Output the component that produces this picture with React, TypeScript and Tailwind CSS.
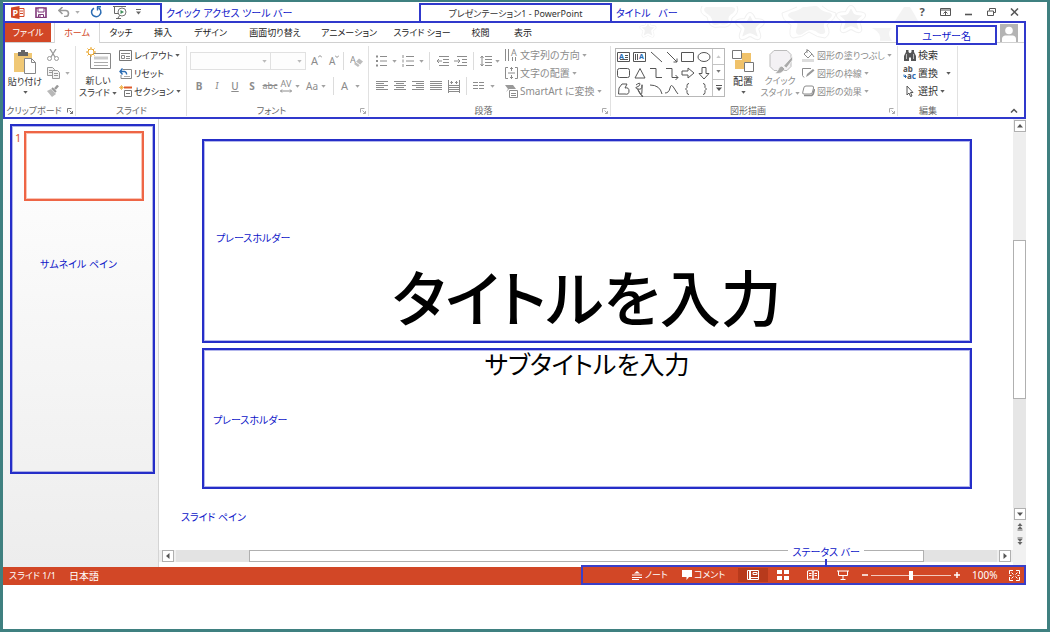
import React, { useState } from 'react'
import clsx from 'clsx'

type IconProps = { w: number; h: number; className?: string; children: React.ReactNode }

function Icon({ w, h, className, children }: IconProps) {
  return (
    <svg
      width={w}
      height={h}
      viewBox={`0 0 ${w} ${h}`}
      fill="none"
      stroke="currentColor"
      className={clsx('block shrink-0', className)}
      aria-hidden="true"
    >
      {children}
    </svg>
  )
}

function Letter({ x, y, size, fill = 'currentColor', bold, children }: {
  x: number
  y: number
  size: number
  fill?: string
  bold?: boolean
  children: React.ReactNode
}) {
  return (
    <text x={x} y={y} fontSize={size} fontWeight={bold ? 700 : 400} fill={fill} stroke="none">
      {children}
    </text>
  )
}

function Caret({ className }: { className?: string }) {
  return (
    <Icon w={5} h={3} className={clsx('opacity-80', className)}>
      <path d="M.3 0h4.400L2.500 2.800z" fill="currentColor" stroke="none" />
    </Icon>
  )
}

function Launcher({ className }: { className?: string }) {
  return (
    <button aria-label="詳細" className={clsx('absolute bottom-[3px] right-[3px]', className)}>
      <Icon w={6} h={6}>
        <path d="M.5 4.500v-4h4M2.500 2.500l3 3M5.500 3v2.500H3" />
      </Icon>
    </button>
  )
}

function Group({ label, width, launcher, className, children }: {
  label: string
  width: string
  launcher?: string
  className?: string
  children: React.ReactNode
}) {
  return (
    <section className={clsx('relative flex shrink-0 flex-col pt-[3px]', width)}>
      <div className={clsx('flex h-[57px] items-start', className)}>{children}</div>
      <h2
        className={clsx(
          'h-[14px] whitespace-nowrap text-center text-[9px] leading-[15px] text-[#666]',
          launcher && 'pr-[13px]',
        )}
      >
        {label}
      </h2>
      {launcher && <Launcher className={launcher} />}
      <span className="absolute bottom-[1px] right-0 top-[3px] w-px bg-[#e1e1e1]" />
    </section>
  )
}

function RowButton({ icon, caret, wide, dim, children }: {
  icon: React.ReactNode
  caret?: boolean
  wide?: boolean
  dim?: boolean
  children: React.ReactNode
}) {
  return (
    <button
      className={clsx(
        'flex h-[18px] items-center gap-[2px] whitespace-nowrap text-[10px] leading-[18px]',
        dim ? 'text-[#8c8c8c]' : 'text-[#333]',
      )}
    >
      <span className="flex w-[13px] justify-center">{icon}</span>
      <span>{children}</span>
      {caret && <Caret className={wide ? 'ml-[6px]' : ''} />}
    </button>
  )
}

function Divider() {
  return <span className="block h-[18px] w-px shrink-0 bg-[#dcdcdc]" />
}

const lineSets = {
  left: [12, 8, 12, 8, 12],
  center: [12, 8, 12, 8, 12],
  right: [12, 8, 12, 8, 12],
  justify: [12, 12, 12, 12, 12],
}

function AlignIcon({ kind }: { kind: keyof typeof lineSets }) {
  return (
    <Icon w={12} h={10}>
      {lineSets[kind].map((len, i) => {
        const x = kind === 'right' ? 12 - len : kind === 'center' ? (12 - len) / 2 : 0
        return <path key={i} d={`M${x} ${i * 2 + 0.5}h${len}`} />
      })}
    </Icon>
  )
}

function Note({ className, children }: { className?: string; children: React.ReactNode }) {
  return (
    <span className={clsx('whitespace-pre text-[10px] leading-[14px] text-[#0d15c8]', className)}>
      {children}
    </span>
  )
}

const starPath = 'M20 2c3 0 4 6 6 8s11 0 12 3-7 6-8 9 5 11 2 13-8-4-12-4-9 6-12 4 3-10 2-13-9-6-8-9 10-1 12-3 3-8 6-8z'

function Decoration() {
  return (
    <svg
      className="absolute right-0 top-[2px] h-[38px] w-[396px]"
      viewBox="0 0 396 38"
      aria-hidden="true"
    >
      <g fill="#f3f3f3" stroke="none">
        <path d="M76 3h26q6 1 1 6-6 3-4 8-1 5-9 3-9 3-8-3 0-5-6-8-4-4 0-6z" />
        <path d="M173 3c8 0 14-3 16 1 6 6 12 3 13 7 0 4-7 5-8 9-1 5 4 8-1 10-5 1-7-5-13-4-6 1-8 7-13 4-3-3 2-8 0-11-3-4-9-5-9-8 1-4 10-3 15-8z" />
        <path d="M265 17q5-8 9-14h6q5 8 8 14zM242 24h20q-6 5 0 13h-12q2-8-8-13z" />
      </g>
      {[
        { x: 106, y: 9, s: 0.7 },
        { x: 207, y: 2, s: 0.7 },
        { x: 10, y: 18, s: 0.4 },
      ].map(star => (
        <g key={star.x} transform={`translate(${star.x} ${star.y}) scale(${star.s})`} fill="#f1f1f1">
          <path d={starPath} stroke="#f1f1f1" strokeWidth="7" strokeLinejoin="round" fill="none" />
          <path d={starPath} stroke="#fff" strokeWidth="4" strokeLinejoin="round" />
        </g>
      ))}
      <g fill="none" stroke="#f1f1f1">
        <path d="M72 2q-4 7 5 11 2 13 13 10 12 2 12-9 8-5 5-12M167 3q-9 4-15 6 0 7 9 12-3 12 2 13 9 0 16-6 9 6 16 6 7-4 2-13 9-7 9-12-9-2-14-7" />
      </g>
    </svg>
  )
}

const tabs = [
  { name: 'タッチ', width: 'w-[42px]' },
  { name: '挿入', width: 'w-[42px]' },
  { name: 'デザイン', width: 'w-[53px]' },
  { name: '画面切り替え', width: 'w-[76px]' },
  { name: 'アニメーション', width: 'w-[72px]' },
  { name: 'スライド ショー', width: 'w-[74px]' },
  { name: '校閲', width: 'w-[43px]' },
  { name: '表示', width: 'w-[42px]' },
]

function TitleBar() {
  return (
    <header className="relative flex h-[19px] items-start pt-[1px]">
      <div className="relative flex h-[20px] w-[159px] items-center border-2 border-[#3039cc] pb-[2px] pl-[6px] text-[#666]">
        <Icon w={14} h={13}>
          <path d="M8 2.500h5v8H8" stroke="#d24726" />
          <path d="M9 5h3M9 7.500h3" stroke="#d24726" />
          <path d="M0 1.500L8.500 0v13L0 11.500z" fill="#d24726" stroke="none" />
          <Letter x={1.500} y={10} size={9} fill="#fff" bold>P</Letter>
        </Icon>
        <button aria-label="上書き保存" className="ml-[10px]">
          <Icon w={12} h={11}>
            <path d="M1 1h10v9.500H1z" stroke="#80397b" strokeWidth="1.600" />
            <path d="M3 1h6v4H3zM3.500 7.500h5v3h-5z" stroke="#80397b" fill="#fff" />
            <path d="M5 8v2.500" stroke="#80397b" />
          </Icon>
        </button>
        <button aria-label="元に戻す" className="ml-[11px] flex items-center gap-[5px] text-[#9a9a9a]">
          <Icon w={12} h={10}>
            <path d="M1 3.500h6.500a3 3 0 010 6H6M4.500 0L1 3.500 4.500 7" strokeWidth="1.600" />
          </Icon>
          <Caret />
        </button>
        <button aria-label="繰り返し" className="ml-[10px]">
          <Icon w={12} h={12}>
            <path d="M8.500 2A4.600 4.600 0 111.800 4.600 5 5 0 014 2.200" stroke="#2b6cb3" strokeWidth="1.600" />
            <path d="M7 .8h4M7.500 .5v4" stroke="#2b6cb3" strokeWidth="1.400" />
          </Icon>
        </button>
        <button aria-label="最初から" className="ml-[11px]">
          <Icon w={14} h={13}>
            <path d="M0 .5h13M1.500 .5v7H6M5 12l2-3" stroke="#666" />
            <circle cx="9" cy="6" r="4" fill="#fff" stroke="#777" />
            <path d="M7.500 4v4L11 6z" fill="#3f8f5a" stroke="none" />
            <path d="M3 12.500h5" />
          </Icon>
        </button>
        <button aria-label="カスタマイズ" className="ml-[9px]">
          <Icon w={5} h={6}>
            <path d="M0 .5h5" />
            <path d="M0 2.500h5L2.500 5.500z" fill="currentColor" stroke="none" />
          </Icon>
        </button>
      </div>
      <Note className="ml-[4px] w-[253px] pt-[3px]">クイック アクセス ツール バー</Note>
      <h1 className="relative h-[20px] w-[193px] whitespace-nowrap border-2 border-[#3039cc] text-center text-[9px] leading-[17px] text-[#333]">
        プレゼンテーション1 - PowerPoint
      </h1>
      <Note className="ml-[4px] pt-[3px]">{'タイトル   バー'}</Note>
      <div className="ml-auto flex h-[18px] items-center gap-[13px] pr-[7px] text-[#555]">
        <button aria-label="ヘルプ" className="w-[10px] text-[11px] font-bold leading-[18px]">?</button>
        <button aria-label="リボンの表示オプション">
          <Icon w={11} h={8}>
            <path d="M.5 .5h10v7H.5zM.5 2h10M5.500 7V3.500M3.500 5.500l2-2 2 2" />
          </Icon>
        </button>
        <button aria-label="最小化">
          <Icon w={10} h={8}>
            <path d="M1 6.500h7" strokeWidth="1.600" />
          </Icon>
        </button>
        <button aria-label="元に戻す (縮小)">
          <Icon w={10} h={8}>
            <path d="M2.500 2.500v-2h6v4H7M.5 3h6v4.500h-6z" />
          </Icon>
        </button>
        <button aria-label="閉じる">
          <Icon w={9} h={8}>
            <path d="M1 .5l7 7M8 .5l-7 7" strokeWidth="1.500" />
          </Icon>
        </button>
      </div>
    </header>
  )
}

function Tabs() {
  return (
    <nav className="flex h-[20px] border-b border-[#d0d0d0] text-[9px] leading-[20px] text-[#222]">
      <button className="w-[46px] shrink-0 whitespace-nowrap bg-[#d24726] text-white">ファイル</button>
      <button className="ml-[3px] h-[20px] w-[46px] shrink-0 whitespace-nowrap border-x border-[#d8d8d8] bg-white text-[#d24726]">
        ホーム
      </button>
      {tabs.map(tab => (
        <button key={tab.name} className={clsx('flex shrink-0 justify-center whitespace-nowrap', tab.width)}>
          {tab.name}
        </button>
      ))}
      <div className="relative ml-auto mt-[2px] flex h-[20px] w-[101px] shrink-0 items-center justify-center border-2 border-[#3039cc] bg-white pt-[2px]">
        <Note>ユーザー名</Note>
      </div>
      <Icon w={18} h={18} className="ml-[3px] mr-[6px] mt-[1px]">
        <path d="M0 0h18v18H0z" fill="#b4b4b4" stroke="none" />
        <circle cx="9" cy="6.500" r="3.800" fill="#fff" stroke="none" />
        <path d="M2 18v-3q0-3 3-3.500h8q3 .5 3 3.500v3z" fill="#fff" stroke="none" />
      </Icon>
    </nav>
  )
}

function ClipboardGroup() {
  return (
    <Group label="クリップボード" width="w-[71px]" launcher="text-[#777]" className="pl-[3px]">
      <button className="flex w-[34px] flex-col items-center whitespace-nowrap pt-[4px] text-[9px] leading-[16px] text-[#333]">
        <Icon w={24} h={24}>
          <path d="M1 3h18v19H1z" fill="#f0c875" stroke="none" />
          <path d="M5 2h10v4H5zM8 0h4v2H8z" fill="#666" stroke="none" />
          <path d="M11.500 8.500h7l4 4v11h-11z" fill="#fff" stroke="#888" />
          <path d="M18.500 8.500v4h4" stroke="#888" />
        </Icon>
        貼り付け
        <Caret className="mt-[1px]" />
      </button>
      <div className="ml-[5px] flex flex-col gap-[6px] pt-[3px] text-[#999]">
        <Icon w={12} h={12}>
          <path d="M3 0l5 8M9 0L4 8" strokeWidth="1.300" />
          <circle cx="2.500" cy="9.500" r="2" />
          <circle cx="9.500" cy="9.500" r="2" />
        </Icon>
        <div className="flex items-center gap-[5px]">
          <Icon w={13} h={12}>
            <path d="M.5 .5h5l2 2v6h-7zM2 3.500h3M2 5.500h3" fill="#f4f4f4" />
            <path d="M5.500 3.500h5l2 2v6h-7zM7 6.500h4M7 8.500h4" fill="#f4f4f4" />
          </Icon>
          <Caret />
        </div>
        <Icon w={12} h={12}>
          <path d="M0 6l4-2 5 5-4 3z" fill="#b8b8b8" stroke="none" />
          <path d="M5 3l4 4" strokeWidth="2" />
          <path d="M8 4l3-3.500" strokeWidth="2.500" />
        </Icon>
      </div>
    </Group>
  )
}

function SlidesGroup() {
  return (
    <Group label="スライド" width="w-[111px]" className="pl-[4px]">
      <button className="flex w-[36px] flex-col items-center whitespace-nowrap pt-[1px] text-[9px] leading-[12px] text-[#333]">
        <Icon w={25} h={24} className="mb-[4px]">
          <path d="M4.500 6.500h20v15h-20z" fill="#fff" stroke="#888" />
          <path d="M8 9.500h14v3H8z" fill="#ccc" stroke="none" />
          <path d="M8 15.500h14M8 18.500h14" stroke="#aaa" />
          <circle cx="5" cy="5" r="3" fill="#fff" stroke="#eaa62c" />
          <path d="M5 0v2M5 8v2M0 5h2M8 5h2M1.500 1.500l1.300 1.300M7.200 7.200l1.300 1.300M1.500 8.500l1.300-1.300M7.200 2.800l1.300-1.300" stroke="#eaa62c" />
        </Icon>
        新しい
        <span className="flex items-center gap-[2px]">スライド<Caret /></span>
      </button>
      <div className="ml-[3px] flex flex-col">
        <RowButton
          caret
          icon={
            <Icon w={13} h={11}>
              <path d="M.5 .5h12v10H.5z" stroke="#777" />
              <path d="M2 3.500h9M2.500 5.500h3v3h-3zM7 6.500h4M7 8.500h4" stroke="#888" />
            </Icon>
          }
        >
          <span className="text-[9px]">レイアウト</span>
        </RowButton>
        <RowButton
          icon={
            <Icon w={13} h={11}>
              <path d="M4 1.500h8.500v9H2V7" stroke="#888" />
              <path d="M5 8.500h6" stroke="#aaa" />
              <path d="M1 3.500h4.500a2.500 2.500 0 012 3M3.500 .5L1 3.500l2.500 3" stroke="#2b6cb3" strokeWidth="1.400" />
            </Icon>
          }
        >
          <span className="text-[9px]">リセット</span>
        </RowButton>
        <RowButton
          caret
          icon={
            <Icon w={13} h={12}>
              <path d="M5 2.500h8" stroke="#dd5a2b" strokeWidth="2" />
              <path d="M5.500 5.500h7v6h-7zM7 8.500h4" stroke="#777" />
              <path d="M2.500 0v5M0 2.500h5M1 1l3 3M4 1L1 4" stroke="#eaa62c" strokeWidth=".7" />
            </Icon>
          }
        >
          <span className="text-[9px]">セクション</span>
        </RowButton>
      </div>
    </Group>
  )
}

function Combo({ label, className }: { label: string; className: string }) {
  return (
    <span className={clsx('relative flex h-[18px] items-center text-[#aaa]', className)}>
      <select aria-label={label} className="h-full w-full appearance-none border border-[#e1e1e1] bg-[#fdfdfd]" />
      <Caret className="pointer-events-none absolute right-[4px]" />
    </span>
  )
}

function FontGroup() {
  return (
    <Group label="フォント" width="w-[182px]" launcher="text-[#aaa]" className="flex-col pl-[3px] text-[#8c8c8c]">
      <div className="flex h-[30px] items-center">
        <Combo label="フォント名" className="w-[81px]" />
        <Combo label="サイズ" className="-ml-px w-[36px]" />
        <button aria-label="フォント サイズの拡大" className="ml-[5px] flex text-[11px] leading-[14px]">
          A
          <Icon w={4} h={3} className="mt-[1px]"><path d="M0 2.500L2 .5l2 2" /></Icon>
        </button>
        <button aria-label="フォント サイズの縮小" className="ml-[7px] flex text-[10px] leading-[14px]">
          A
          <Icon w={4} h={3} className="mt-[1px]"><path d="M0 .5l2 2 2-2" /></Icon>
        </button>
        <span className="ml-[4px]"><Divider /></span>
        <Icon w={13} h={13} className="ml-[6px]">
          <Letter x={0} y={8} size={9}>A</Letter>
          <path d="M4 9l5-5.500 4 3-5 5.500z" fill="#bdbdbd" stroke="none" />
          <path d="M6 7l4 3" stroke="#fff" />
        </Icon>
      </div>
      <div className="flex h-[20px] items-center text-[10px]">
        <button className="w-[18px] font-bold">B</button>
        <button className="w-[18px] font-serif italic">I</button>
        <button className="w-[18px] font-medium underline">U</button>
        <button className="w-[16px] font-bold">S</button>
        <button className="w-[20px] text-[9px] line-through">abc</button>
        <button className="flex items-center gap-[3px] text-[9px]">
          <span className="flex flex-col items-center leading-[10px]">
            AV
            <Icon w={12} h={4}><path d="M.5 2h11M2 .5L.5 2 2 3.500M10 .5L11.500 2 10 3.500" /></Icon>
          </span>
          <Caret />
        </button>
        <button className="ml-[6px] flex items-center gap-[3px]">Aa<Caret /></button>
        <span className="mx-[7px]"><Divider /></span>
        <button className="flex items-center gap-[7px] text-[11px]">A<Caret /></button>
      </div>
    </Group>
  )
}

function ParagraphGroup() {
  return (
    <Group label="段落" width="w-[242px]" launcher="text-[#aaa]" className="pl-[7px] text-[#8c8c8c]">
      <div className="flex w-[124px] flex-col">
        <div className="flex h-[30px] items-center">
          <Icon w={11} h={12}>
            <path d="M4 1.500h7M4 6h7M4 10.500h7" />
            <path d="M0 1.500h2M0 6h2M0 10.500h2" strokeWidth="2" />
          </Icon>
          <Caret className="ml-[5px]" />
          <Icon w={12} h={12} className="ml-[5px]">
            <path d="M4 1.500h8M4 6h8M4 10.500h8M1 0v3M1 4.500v3M1 9v3" />
          </Icon>
          <Caret className="mx-[5px]" />
          <Divider />
          <Icon w={13} h={10} className="ml-[6px]">
            <path d="M3 .5h10M7 3.500h6M7 6.500h6M3 9.500h10M6 5H1M3 3L1 5l2 2" />
          </Icon>
          <Icon w={13} h={10} className="ml-[5px]">
            <path d="M3 .5h10M8 3.500h5M8 6.500h5M3 9.500h10M0 5h6M4 3l2 2-2 2" />
          </Icon>
          <span className="mx-[6px]"><Divider /></span>
          <Icon w={12} h={12}>
            <path d="M5 1.500h7M5 4.500h7M5 7.500h7M5 10.500h7M2 1v10M.5 3L2 1l1.500 2M.5 9L2 11l1.500-2" />
          </Icon>
          <Caret className="ml-[3px]" />
        </div>
        <div className="flex h-[20px] items-center gap-[6px]">
          <button aria-label="左揃え"><AlignIcon kind="left" /></button>
          <button aria-label="中央揃え"><AlignIcon kind="center" /></button>
          <button aria-label="右揃え"><AlignIcon kind="right" /></button>
          <button aria-label="両端揃え"><AlignIcon kind="justify" /></button>
          <button aria-label="均等割り付け">
            <Icon w={12} h={13}>
              <path d="M.5 0v13M11.500 0v13M1 5.500h10M1 7.500h10M1 9.500h10M1 11.500h10M3 2.500h2M7 2.500h2M4 1L2.500 2.500 4 4M8 1l1.500 1.500L8 4" />
            </Icon>
          </button>
          <Divider />
          <Icon w={11} h={8}>
            <path d="M0 .5h5M6 .5h5M0 3.500h5M6 3.500h5M0 6.500h5M6 6.500h5" />
          </Icon>
          <Caret />
        </div>
      </div>
      <div className="ml-[5px] flex flex-col">
        <RowButton
          dim
          caret
          icon={
            <Icon w={13} h={12}>
              <path d="M.5 0v12M3.500 0v12M7.500 8v4M10.500 8v4" />
              <Letter x={6} y={7} size={9}>A</Letter>
            </Icon>
          }
        >
          文字列の方向
        </RowButton>
        <RowButton
          dim
          caret
          icon={
            <Icon w={13} h={12}>
              <path d="M3 .5H.5v11H3M10 .5h2.500v11H10M3 6h7M6.500 0v4M6.500 8v4M5 2l1.500-1.500L8 2M5 10l1.500 1.500L8 10" />
            </Icon>
          }
        >
          文字の配置
        </RowButton>
        <RowButton
          dim
          caret
          icon={
            <Icon w={13} h={13}>
              <path d="M0 0h8l3 4H4l-3 3 2-3z" fill="#999" stroke="none" />
              <path d="M4.500 5.500h8v7h-8zM6 8.500h5M6 10.500h5" fill="#fff" />
            </Icon>
          }
        >
          SmartArt に変換
        </RowButton>
      </div>
    </Group>
  )
}

// one cell of the shapes gallery is 16 x 16
const shapes = [
  { d: 'M1.500 3.500h12v9h-12zM9 6.500h3M9 8.500h3M4 10.500h8', letter: 3 },
  { d: 'M1.500 3.500h12v9h-12zM3.500 5v6M5.500 5v6', letter: 7 },
  { d: 'M3 3l11 10' },
  { d: 'M3 3l10 10M13 9.500V13H9.500' },
  { d: 'M1.500 3.500h12v9h-12z' },
  { d: 'M2 8a6 4.500 0 1012 0a6 4.500 0 10-12 0' },
  { d: 'M3.500 3.500h8q2 0 2 2v5q0 2-2 2h-8q-2 0-2-2v-5q0-2 2-2z' },
  { d: 'M8 3.500l5 9.500H3z' },
  { d: 'M2 3.500h6v9h6' },
  { d: 'M2 3.500h6v9h6M11.500 10l2.500 2.500-2.500 2.500' },
  { d: 'M2 6h6V3l6 5-6 5v-3H2z' },
  { d: 'M6 2.500v6H3l5 5.500 5-5.500h-3v-6z' },
  { d: 'M3 7l3-4h5l-2 4q4-1 4 3t-4 3H2.500z' },
  { d: 'M4 4q4-3 4-1t-3 3 1 2 4-3 0 4-3 2 1 1 2 2' },
  { d: 'M2 4q10 0 12 9' },
  { d: 'M1 12q4 0 5-5t4 0 4 6' },
  { d: 'M9 2.500q-2 0-2 2v2L5.500 8 7 9.500v2q0 2 2 2' },
  { d: 'M7 2.500q2 0 2 2v2L10.500 8 9 9.500v2q0 2-2 2' },
]

function DrawingGroup() {
  return (
    <Group label="図形描画" width="w-[287px]" launcher="text-[#aaa]" className="pl-[4px]">
      <div className="mt-[2px] flex h-[49px] w-[110px] shrink-0 border border-[#b8b8b8] bg-white text-[#555]">
        <div className="grid grow grid-cols-6">
          {shapes.map((shape, i) => (
            <Icon key={i} w={16} h={16}>
              <path d={shape.d} />
              {shape.letter && <Letter x={shape.letter} y={10} size={7} fill="#2b6cb3" bold>A</Letter>}
            </Icon>
          ))}
        </div>
        <div className="grid w-[12px] shrink-0 grid-rows-3 divide-y divide-[#c4c4c4] border-l border-[#c4c4c4]">
          <button aria-label="上へ" className="flex items-center justify-center text-[#bbb]"><Caret className="rotate-180" /></button>
          <button aria-label="下へ" className="flex items-center justify-center"><Caret /></button>
          <button aria-label="その他" className="flex items-center justify-center">
            <Icon w={6} h={6}>
              <path d="M0 .5h6" />
              <path d="M0 2.500h6L3 6z" fill="currentColor" stroke="none" />
            </Icon>
          </button>
        </div>
      </div>
      <button className="ml-[7px] flex w-[22px] shrink-0 flex-col items-center whitespace-nowrap pt-[3px] text-[10px] leading-[16px] text-[#333]">
        <Icon w={22} h={24}>
          <path d="M10 4h9v9h-9zM3 11h9v9H3z" fill="#f0c26a" stroke="none" />
          <path d="M.5 1.500h9v8h-9zM12.500 13.500h9v9h-9z" fill="#fff" stroke="#777" />
        </Icon>
        <span>配置</span>
        <Caret className="mt-[2px]" />
      </button>
      <button className="ml-[7px] flex w-[38px] shrink-0 flex-col items-center whitespace-nowrap pt-[3px] text-[9px] leading-[12px] text-[#8c8c8c]">
        <Icon w={25} h={26}>
          <path d="M6 1.500h13l4 4v12l-4 4H6l-4-4v-12z" fill="#f3f1f4" stroke="#bbb" strokeLinejoin="round" />
          <path d="M24.500 7l-9 10 3 2 6-8zM14 17q-3 0-4 4-1 2-3 3 6 2 10-4z" fill="#aaa" stroke="#fff" strokeWidth=".7" />
        </Icon>
        クイック
        <span className="flex items-center gap-[2px]">スタイル<Caret /></span>
      </button>
      <div className="ml-[3px] flex flex-col">
        <RowButton
          dim
          caret
          icon={
            <Icon w={13} h={13}>
              <path d="M0 10h12v3H0z" fill="#ddd" stroke="none" />
              <path d="M2 5l4-4 4 4-4 4zM5 0v4M10 5l2 3" />
            </Icon>
          }
        >
          <span className="text-[9px]">図形の塗りつぶし</span>
        </RowButton>
        <RowButton
          dim
          caret
          icon={
            <Icon w={13} h={11}>
              <path d="M9 .5H.5v7L2 9.500" />
              <path d="M4 9l1-3 6-5 1.500 1.500-6 5z" fill="#999" stroke="none" />
            </Icon>
          }
        >
          <span className="text-[9px]">図形の枠線</span>
        </RowButton>
        <RowButton
          dim
          caret
          icon={
            <Icon w={13} h={12}>
              <path d="M4 1h6q2 0 1.500 2l-1 4q-.5 2-2.500 2H2Q0 9 .8 7l1-4Q2 1 4 1z" fill="#fff" />
              <path d="M2 10.500h6.500q2.500 0 3-2.500l1-4" strokeWidth="1.600" />
            </Icon>
          }
        >
          <span className="text-[9px]">図形の効果</span>
        </RowButton>
      </div>
    </Group>
  )
}

function EditGroup() {
  return (
    <Group label="編集" width="w-[60px]" className="pl-[5px]">
      <div className="flex flex-col">
        <RowButton
          icon={
            <Icon w={12} h={11}>
              <path d="M2 0h2.500v2l1 1h1l1-1V0H10v2l2 4v5H7V7.500H5V11H0V6l2-4z" fill="#555" stroke="none" />
              <path d="M2.500 4v5M9.500 4v5" stroke="#fff" strokeWidth=".6" />
            </Icon>
          }
        >
          検索
        </RowButton>
        <RowButton
          caret
          wide
          icon={
            <Icon w={13} h={14}>
              <text fontSize="8" fontWeight="700" fill="#555" stroke="none">
                <tspan x="0" y="6">ab</tspan>
                <tspan x="4" y="13">a</tspan>
                <tspan fill="#2b6cb3">c</tspan>
              </text>
              <path d="M1 8.500v2h2M2 9l1.500 1.500L2 12" stroke="#2b6cb3" />
            </Icon>
          }
        >
          置換
        </RowButton>
        <RowButton
          caret
          icon={
            <Icon w={8} h={12}>
              <path d="M1 1v9l2-2 1.500 3.500L6 11 4.500 7.500H7z" stroke="#555" fill="#fff" />
            </Icon>
          }
        >
          選択
        </RowButton>
      </div>
    </Group>
  )
}

function Ribbon() {
  return (
    <div className="relative z-0 h-[98px] border-2 border-[#3039cc]">
      <Tabs />
      <div className="flex h-[74px]">
        <ClipboardGroup />
        <SlidesGroup />
        <FontGroup />
        <ParagraphGroup />
        <DrawingGroup />
        <EditGroup />
        <button aria-label="リボンを折りたたむ" className="mb-[4px] ml-auto mr-[6px] self-end text-[#555]">
          <Icon w={8} h={5}>
            <path d="M1 4.500l3-3 3 3" strokeWidth="1.500" />
          </Icon>
        </button>
      </div>
    </div>
  )
}

function ScrollArrow({ label, d }: { label: string; d: string }) {
  return (
    <button aria-label={label} className="flex size-[12px] shrink-0 items-center justify-center border border-[#b0b0b0] bg-white text-[#555]">
      <Icon w={6} h={6}>
        <path d={d} fill="currentColor" stroke="none" />
      </Icon>
    </button>
  )
}

function ThumbnailPane() {
  return (
    <aside className="w-[156px] shrink-0 border-r border-[#d4d4d4] bg-linear-to-b from-white to-[#ededed] pl-[7px] pr-[3px] pt-[5px]">
      <div className="h-[350px] border-2 border-[#252ec8] ring-1 ring-inset ring-[#252ec8]/35">
        <div className="flex pl-[3px] pt-[5px]">
          <span className="w-[9px] text-[11px] leading-[14px] text-[#d9542f]">1</span>
          <div className="h-[70px] w-[120px] border-2 border-[#ee6545] bg-white ring-1 ring-inset ring-[#f9c4b5]" />
        </div>
        <Note className="mt-[56px] block pl-[28px]">サムネイル ペイン</Note>
      </div>
    </aside>
  )
}

function SlidePane() {
  return (
    <main className="flex min-w-0 grow flex-col bg-white">
      <div className="ml-[43px] mr-[41px] mt-[20px] flex flex-col gap-[5px]">
        <section className="h-[204px] border-2 border-[#252ec8] ring-1 ring-inset ring-[#252ec8]/35">
          <Note className="mt-[90px] block pl-[12px]">プレースホルダー</Note>
          <p className="mt-[10px] whitespace-nowrap text-center text-[61px] font-medium leading-[88px] text-black">
            タイトルを入力
          </p>
        </section>
        <section className="h-[141px] border-2 border-[#252ec8] ring-1 ring-inset ring-[#252ec8]/35">
          <p className="whitespace-nowrap text-center text-[25px] leading-[28px] text-black">
            サブタイトルを入力
          </p>
          <Note className="mt-[35px] block pl-[9px]">プレースホルダー</Note>
        </section>
      </div>
      <Note className="mb-auto mt-[21px] block pl-[22px]">スライド ペイン</Note>
      <div className="relative mb-[5px] flex h-[12px] items-center bg-[#efefef] pl-[3px] pr-[2px]">
        <ScrollArrow label="左へ" d="M4.500 0v6L1 3z" />
        <div className="mx-[2px] flex h-[12px] grow bg-[#e3e3e3] pl-[73px] pr-[73px]">
          <div className="grow border border-[#b0b0b0] bg-white" />
        </div>
        <ScrollArrow label="右へ" d="M1.500 0v6L5 3z" />
        <div className="absolute -top-[5px] right-[149px] flex flex-col items-center">
          <Note className="bg-white px-[4px] leading-[13px]">ステータス バー</Note>
          <span className="h-[8px] w-[2px] bg-[#3039cc]" />
        </div>
      </div>
    </main>
  )
}

function VerticalScroll() {
  return (
    <div className="flex w-[13px] shrink-0 flex-col items-center bg-[#f1f1f1] pt-[1px]">
      <ScrollArrow label="上へ" d="M0 4.500h6L3 1z" />
      <div className="mt-[1px] h-[107px] w-full bg-[#eee]" />
      <div className="h-[159px] w-full border border-[#b0b0b0] bg-white" />
      <div className="h-[109px] w-full bg-[#e6e6e6]" />
      <ScrollArrow label="下へ" d="M0 1.500h6L3 5z" />
      <button aria-label="前のスライド" className="mt-[3px] text-[#666]">
        <Icon w={6} h={8}>
          <path d="M.5 3h5L3 0zM.5 6h5L3 3zM.5 6.500h5v1h-5z" fill="currentColor" stroke="none" />
        </Icon>
      </button>
      <button aria-label="次のスライド" className="mt-[6px] text-[#666]">
        <Icon w={6} h={8}>
          <path d="M.5 .5h5v1h-5zM.5 2h5L3 5zM.5 5h5L3 8z" fill="currentColor" stroke="none" />
        </Icon>
      </button>
    </div>
  )
}

function StatusBar() {
  const [zoom, setZoom] = useState(50)

  return (
    <footer className="flex h-[18px] bg-[#d24726] pl-[6px] text-[10px] leading-[18px] text-white">
      <span className="whitespace-nowrap text-[9px]">スライド 1/1</span>
      <span className="ml-[13px] whitespace-nowrap">日本語</span>
      <div className="-mt-[2px] ml-auto flex h-[20px] w-[445px] shrink-0 items-center border-2 border-[#3a3fc8] pr-[4px]">
        <button className="ml-[49px] flex items-center gap-[3px] whitespace-nowrap text-[9px]">
          <Icon w={10} h={9}>
            <path d="M0 4h10M0 6.500h10M0 8.500h7" />
            <path d="M2 2.500h6L5 0z" fill="currentColor" stroke="none" />
          </Icon>
          ノート
        </button>
        <button className="ml-[14px] flex items-center gap-[2px] whitespace-nowrap text-[9px]">
          <Icon w={10} h={10}>
            <path d="M0 0h10v7H7L4.500 10V7H0z" fill="currentColor" stroke="none" />
          </Icon>
          コメント
        </button>
        <div className="ml-auto flex items-center">
          <button aria-label="標準" className="flex h-[14px] w-[30px] items-center justify-center bg-[#b83a1c]">
            <Icon w={12} h={10}>
              <path d="M.5 .5h11v9H.5z" />
              <path d="M3 0v10" strokeWidth="2" />
              <path d="M4 7.500h8M6 2.500h4v2H6z" />
            </Icon>
          </button>
          <button aria-label="スライド一覧" className="flex w-[30px] justify-center">
            <Icon w={12} h={10}>
              <path d="M0 0h5v4H0zM7 0h5v4H7zM0 6h5v4H0zM7 6h5v4H7z" fill="currentColor" stroke="none" />
            </Icon>
          </button>
          <button aria-label="閲覧表示" className="flex w-[30px] justify-center">
            <Icon w={12} h={10}>
              <path d="M.5 1q3-1 5.500 0v8.500Q3 8.500 .5 9.500zM11.500 1q-3-1-5.500 0v8.500q3-1 5.500 0zM2 3.500h2.500M2 5.500h2.500M7.500 3.500H10M7.500 5.500H10" />
            </Icon>
          </button>
          <button aria-label="スライド ショー" className="flex w-[30px] justify-center">
            <Icon w={12} h={10}>
              <path d="M0 1h12M1.500 1v4.500h9V1M6 5.500v4M3.500 9.500h5" />
            </Icon>
          </button>
        </div>
        <button aria-label="縮小" className="ml-[4px]">
          <Icon w={6} h={6}>
            <path d="M0 3h6" strokeWidth="1.500" />
          </Icon>
        </button>
        <input
          type="range"
          aria-label="ズーム"
          value={zoom}
          onChange={e => setZoom(Number(e.target.value))}
          className="mx-[3px] h-px w-[80px] appearance-none bg-[#f3c9bd] [&::-webkit-slider-thumb]:h-[9px] [&::-webkit-slider-thumb]:w-[4px] [&::-webkit-slider-thumb]:appearance-none [&::-webkit-slider-thumb]:bg-white"
        />
        <button aria-label="拡大">
          <Icon w={6} h={6}>
            <path d="M0 3h6M3 0v6" strokeWidth="1.500" />
          </Icon>
        </button>
        <span className="ml-[12px] w-[28px] text-[10px]">100%</span>
        <button aria-label="ウィンドウに合わせる" className="ml-[9px]">
          <Icon w={11} h={11}>
            <path d="M4 .5H.5V4M7 .5h3.500V4M4 10.500H.5V7M7 10.500h3.500V7M2.500 2.500L4.500 4.500M8.500 2.500L6.500 4.500M2.500 8.500L4.500 6.500M8.500 8.500L6.500 6.500M.5 5.500h2M8.500 5.500h2" />
          </Icon>
        </button>
      </div>
    </footer>
  )
}

export default function App() {
  return (
    <div className="min-h-screen border-[3px] border-t-2 border-[#3f8080] bg-white pr-[21px] font-['Noto_Sans','Noto_Sans_CJK_JP',sans-serif] [font-feature-settings:'palt']">
      <div className="relative">
        <Decoration />
        <TitleBar />
        <Ribbon />
        <div className="flex h-[448px]">
          <ThumbnailPane />
          <SlidePane />
          <VerticalScroll />
        </div>
        <StatusBar />
      </div>
    </div>
  )
}
